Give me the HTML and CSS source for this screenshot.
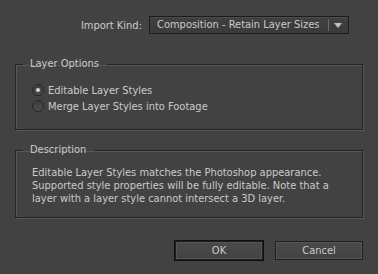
FILE: index.html
```html
<!DOCTYPE html>
<html lang="en">
<head>
  <meta charset="UTF-8" />
  <title>Import Kind</title>
  <link rel="stylesheet" href="styles.css">
</head>
<body>
  <div class="dialog">
    <div class="kind-row">
      <label for="kind">Import Kind:</label>
      <div class="select" id="kind">
        <span class="select-value">Composition - Retain Layer Sizes</span>
        <span class="select-arrow"></span>
      </div>
    </div>

    <fieldset class="group options">
      <legend>Layer Options</legend>
      <label class="radio"><span class="dot checked"></span>Editable Layer Styles</label>
      <label class="radio"><span class="dot"></span>Merge Layer Styles into Footage</label>
    </fieldset>

    <fieldset class="group desc">
      <legend>Description</legend>
      <p>Editable Layer Styles matches the Photoshop appearance. Supported style properties will be fully editable. Note that a layer with a layer style cannot intersect a 3D layer.</p>
    </fieldset>

    <div class="buttons">
      <button class="btn default">OK</button>
      <button class="btn">Cancel</button>
    </div>
  </div>
</body>
</html>
```

FILE: styles.css
```css
html, body {
  margin: 0;
  background: #424242;
}
body {
  font-family: "DejaVu Sans Condensed", "DejaVu Sans", sans-serif;
  font-size: 11px;
  color: #c9cbcd;
}
.dialog {
  width: 378px;
  height: 274px;
  padding-top: 16px;
  box-sizing: border-box;
}
.kind-row {
  display: flex;
  align-items: center;
  justify-content: flex-end;
  padding-right: 29px;
  gap: 7px;
}
.select {
  width: 200px;
  height: 18px;
  box-sizing: border-box;
  border: 1px solid #1c1c1c;
  background: linear-gradient(#404040, #3a3a3a);
  box-shadow: inset 0 1px 0 #4c4c4c;
  display: flex;
  align-items: center;
}
.select-value {
  flex: 1;
  padding-left: 7px;
  border-right: 1px solid #6a6a6a;
  line-height: 12px;
  margin-right: 5px;
}
.select-arrow {
  width: 0;
  height: 0;
  border-left: 4px solid transparent;
  border-right: 4px solid transparent;
  border-top: 5px solid #c0c0c0;
  margin-right: 6px;
}
.group {
  margin: 0 15px 0 15px;
  padding: 0 0 0 16px;
  border: 1px solid #242424;
  box-shadow: 1px 1px 0 #585858, inset 1px 1px 0 #585858;
}
.group legend {
  padding: 0 8px 0 7px;
  margin-left: -9px;
  line-height: 14px;
}
.options {
  margin-top: 23px;
  height: 60px;
  box-sizing: content-box;
  padding-top: 11px;
}
.radio {
  display: flex;
  align-items: center;
  height: 16px;
}
.dot {
  width: 10px;
  height: 10px;
  border-radius: 50%;
  border: 1px solid #262626;
  background: linear-gradient(#3c3c3c, #4c4c4c);
  margin-right: 4px;
  display: flex;
  align-items: center;
  justify-content: center;
}
.dot.checked::after {
  content: "";
  width: 4px;
  height: 4px;
  border-radius: 50%;
  background: #d8d8d8;
}
.desc {
  margin-top: 13px;
  height: 73px;
}
.desc p {
  margin: 9px 24px 0 0;
  line-height: 13px;
}
.buttons {
  display: flex;
  justify-content: flex-end;
  gap: 12px;
  padding-right: 15px;
  margin-top: 23px;
}
.btn {
  width: 88px;
  height: 19px;
  font: inherit;
  color: #c9cbcd;
  border: 1px solid #1e1e1e;
  background: linear-gradient(#4a4a4a, #424242);
  box-shadow: inset 0 0 0 1px #555;
  padding: 0;
}
.btn.default {
  outline: 1px solid #101010;
}
```
